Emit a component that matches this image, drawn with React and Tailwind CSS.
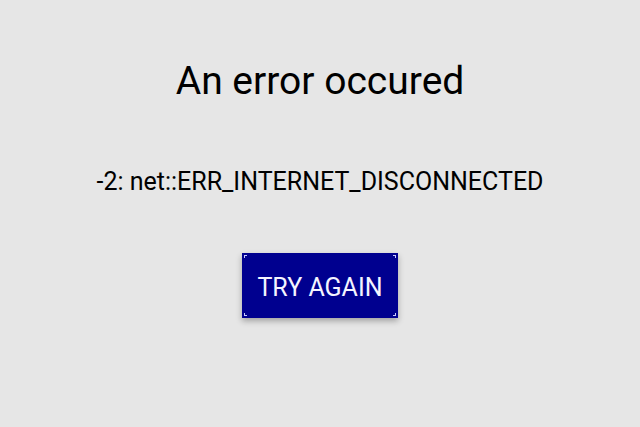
export default function App() {
  return (
    <div className="w-[640px] h-[427px] bg-[#e6e6e6] flex flex-col items-center" style={{ fontFamily: 'Roboto, sans-serif' }}>
      <h1 className="mt-[62px] text-[39px] leading-none text-black font-normal">An error occured</h1>
      <p className="mt-[68px] text-[25px] leading-none text-black">-2: net::ERR_INTERNET_DISCONNECTED</p>
      <button className="relative mt-[59px] w-[156px] h-[65px] pt-[3px] bg-[#00008f] text-[#f4f4ff] text-[25px] leading-none shadow-[0_3px_6px_rgba(0,0,0,0.3)]">
        TRY AGAIN
        <span className="absolute left-[2px] top-[2px] w-[3px] h-[3px] border-l border-t border-[#c8c8ff]"></span>
        <span className="absolute right-[2px] top-[2px] w-[3px] h-[3px] border-r border-t border-[#c8c8ff]"></span>
        <span className="absolute left-[2px] bottom-[2px] w-[3px] h-[3px] border-l border-b border-[#c8c8ff]"></span>
        <span className="absolute right-[2px] bottom-[2px] w-[3px] h-[3px] border-r border-b border-[#c8c8ff]"></span>
      </button>
    </div>
  );
}
